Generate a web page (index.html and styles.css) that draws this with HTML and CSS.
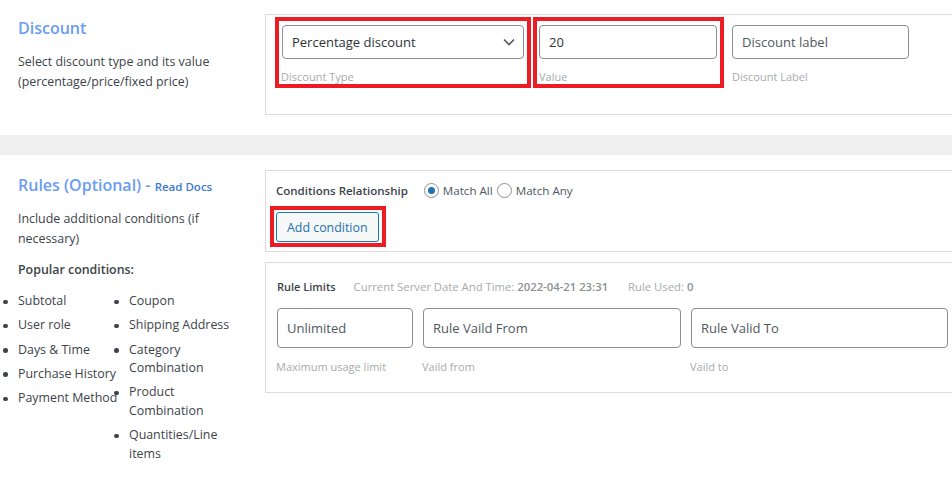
FILE: index.html
```html
<!DOCTYPE html>
<html lang="en">
<head>
<meta charset="utf-8">
<title>Discount rule</title>
<link rel="stylesheet" href="styles.css">
</head>
<body>
<div class="page">
  <section class="row row-discount">
    <div class="side">
      <h2 class="title">Discount</h2>
      <p class="desc">Select discount type and its value<br>(percentage/price/fixed price)</p>
    </div>
    <div class="panel panel-discount">
      <div class="field field-type marked">
        <div class="control select">
          <span>Percentage discount</span>
          <svg class="chevron" width="12" height="8" viewBox="0 0 12 8"><path d="M1 1.5 L6 6.5 L11 1.5" fill="none" stroke="#50575e" stroke-width="1.6"/></svg>
        </div>
        <span class="hint">Discount Type</span>
      </div>
      <div class="field field-value marked">
        <div class="control">20</div>
        <span class="hint">Value</span>
      </div>
      <div class="field field-label">
        <div class="control placeholder">Discount label</div>
        <span class="hint">Discount Label</span>
      </div>
    </div>
  </section>

  <div class="band"></div>

  <section class="row row-rules">
    <div class="side">
      <h2 class="title">Rules (Optional) <span class="dash">-</span> <a class="docs" href="#">Read Docs</a></h2>
      <p class="desc desc-rules">Include additional conditions (if necessary)</p>
      <p class="popular">Popular conditions:</p>
      <div class="lists">
        <ul class="list list-left">
          <li>Subtotal</li>
          <li>User role</li>
          <li>Days &amp; Time</li>
          <li>Purchase History</li>
          <li>Payment Method</li>
        </ul>
        <ul class="list list-right">
          <li>Coupon</li>
          <li>Shipping Address</li>
          <li>Category Combination</li>
          <li>Product Combination</li>
          <li>Quantities/Line items</li>
        </ul>
      </div>
    </div>
    <div class="main">
      <div class="panel panel-conditions">
        <div class="relation">
          <span class="rel-label">Conditions Relationship</span>
          <span class="radio checked"></span><span class="radio-text">Match All</span>
          <span class="radio"></span><span class="radio-text">Match Any</span>
        </div>
        <div class="btn-wrap marked">
          <button class="btn" type="button">Add condition</button>
        </div>
      </div>
      <div class="panel panel-limits">
        <div class="limits-head">
          <span class="lh-title">Rule Limits</span>
          <span class="lh-meta">Current Server Date And Time: <b>2022-04-21 23:31</b></span>
          <span class="lh-meta lh-used">Rule Used: <b>0</b></span>
        </div>
        <div class="limits-fields">
          <div class="lfield lf-usage">
            <div class="control tall">Unlimited</div>
            <span class="hint">Maximum usage limit</span>
          </div>
          <div class="lfield lf-from">
            <div class="control tall">Rule Vaild From</div>
            <span class="hint">Vaild from</span>
          </div>
          <div class="lfield lf-to">
            <div class="control tall">Rule Valid To</div>
            <span class="hint">Vaild to</span>
          </div>
        </div>
      </div>
    </div>
  </section>
</div>
</body>
</html>
```

FILE: styles.css
```css
* { box-sizing: border-box; }
html, body { margin: 0; padding: 0; background: #fff; }
body {
  font-family: "Open Sans", "Noto Sans", sans-serif;
  color: #3c434a;
  font-size: 12px;
  width: 952px;
  height: 482px;
  overflow: hidden;
}
.page { width: 952px; }

.row { display: flex; }
.row-discount { height: 135px; }
.side { width: 265px; flex: none; padding-left: 18px; }

.title {
  margin: 0;
  font-size: 16px;
  font-weight: 600;
  color: #6b9cf3;
  line-height: 22px;
}
.row-discount .title { margin-top: 17px; }
.desc {
  margin: 13px 0 0;
  font-size: 12.4px;
  line-height: 20px;
  padding-right: 30px;
}

.panel {
  border: 1px solid #dcdcde;
  border-right: none;
  background: #fff;
}
.panel-discount {
  flex: 1;
  margin-top: 14px;
  height: 101px;
  display: flex;
  align-items: flex-start;
  gap: 15px;
  padding: 10px 0 0 16px;
}

.field { display: flex; flex-direction: column; position: relative; }
.field-type { width: 242px; }
.field-value { width: 178px; }
.field-label { width: 177px; }

.marked::after {
  content: "";
  position: absolute;
  border: 4px solid #ec1c24;
  pointer-events: none;
}
.field-type::after { top: -8px; left: -7px; right: -7px; bottom: -3px; }
.field-value::after { top: -8px; left: -6px; right: -7px; bottom: -3px; }

.control {
  height: 34px;
  border: 1px solid #8c8f94;
  border-radius: 4px;
  padding: 0 9px;
  font-size: 13px;
  display: flex;
  align-items: center;
  color: #2c3338;
  background: #fff;
}
.placeholder { color: #50575e; }
.select { justify-content: space-between; padding-right: 8px; }
.chevron { display: block; }

.hint {
  margin-top: 10px;
  font-size: 11px;
  line-height: 16px;
  color: #a7aaad;
}
.field-type .hint { margin-left: -1px; }

.band { height: 20px; background: #f0f0f1; }

.row-rules { padding-top: 15px; }
.row-rules .title { margin-top: 4px; }
.dash { color: #6b9cf3; }
.docs {
  font-size: 11.5px;
  font-weight: 600;
  color: #3b7ad4;
  text-decoration: none;
}
.desc-rules { margin-top: 11px; padding-right: 20px; }
.popular {
  margin: 11px 0 0;
  font-size: 12.4px;
  font-weight: 600;
  line-height: 20px;
}
.lists {
  display: flex;
  margin-left: -18px;
  margin-top: 12px;
}
.list {
  margin: 0;
  padding: 0 0 0 18px;
  list-style: none;
  font-size: 12.4px;
  line-height: 18.5px;
}
.list li { position: relative; margin-bottom: 5.8px; white-space: normal; }
.list li::before {
  content: "";
  position: absolute;
  left: -15px;
  top: 7.5px;
  width: 4.5px;
  height: 4.5px;
  border-radius: 50%;
  background: #3c434a;
}
.list-left { width: 129px; padding-left: 18px; }
.list-left li { white-space: nowrap; }
.list-right { width: 110px; padding-left: 0; }

.main { flex: 1; display: flex; flex-direction: column; gap: 10px; }
.panel-conditions { padding: 9px 10px 9px 10px; }
.relation {
  display: flex;
  align-items: center;
  height: 20px;
  font-size: 11.6px;
}
.rel-label { font-weight: 600; font-size: 11.5px; margin-right: 16px; }
.radio {
  width: 15px;
  height: 15px;
  border: 1px solid #8c8f94;
  border-radius: 50%;
  margin-right: 4px;
  position: relative;
  background: #fff;
}
.radio.checked::after {
  content: "";
  position: absolute;
  left: 3px; top: 3px;
  width: 7px; height: 7px;
  border-radius: 50%;
  background: #2271b1;
}
.radio-text { margin-right: 4px; color: #50575e; }

.btn-wrap { position: relative; display: inline-block; align-self: flex-start; margin-top: 12px; }
.btn-wrap::after { top: -6px; left: -6px; right: -7px; bottom: -5px; }
.btn {
  display: block;
  height: 30px;
  padding: 0 10px;
  font-family: inherit;
  font-size: 12.4px;
  color: #2271b1;
  background: #f6f7f7;
  border: 1px solid #2271b1;
  border-radius: 3px;
}

.panel-limits { padding: 16px 0 17px 11px; }
.limits-head {
  display: flex;
  gap: 18px;
  font-size: 11.3px;
  line-height: 16px;
  color: #a7aaad;
}
.lh-used { margin-left: 2px; }
.lh-title { color: #3c434a; font-weight: 600; font-size: 11px; }
.lh-meta b { font-weight: 600; color: #8c8f94; }
.limits-fields { display: flex; gap: 10px; margin-top: 13px; }
.lfield { display: flex; flex-direction: column; }
.lf-usage { width: 136px; }
.lf-from { width: 258px; }
.lf-to { width: 257px; }
.control.tall { height: 40px; color: #50575e; }
.lfield .hint { margin-left: -1px; margin-top: 11px; }
```
